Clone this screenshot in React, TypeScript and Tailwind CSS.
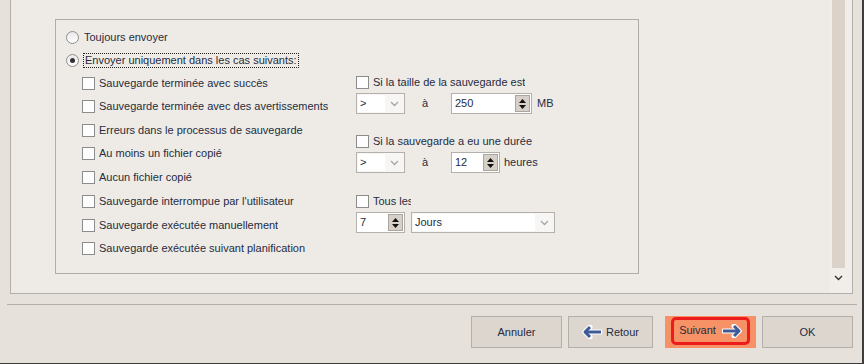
import React from 'react';

const txt = 'text-[#262c40]';

function Check({ label, clip }: { label: string; clip?: string }) {
  return (
    <div className="flex items-center">
      <span className="w-[13px] h-[13px] border border-[#8c8c8c] bg-[#fdfdfd] shrink-0" />
      <span className={`ml-[4px] whitespace-nowrap overflow-hidden ${clip ?? ''}`}>{label}</span>
    </div>
  );
}

function Radio({ checked }: { checked?: boolean }) {
  return (
    <span className="w-[13px] h-[13px] rounded-full border border-[#8f8f8f] bg-gradient-to-b from-[#e8e8e8] to-[#ffffff] flex items-center justify-center shrink-0">
      {checked && <span className="w-[5px] h-[5px] rounded-full bg-[#333]" />}
    </span>
  );
}

function Chevron({ color = '#a8a8a8' }: { color?: string }) {
  return (
    <svg width="9" height="6" viewBox="0 0 9 6">
      <path d="M1 1 L4.5 4.5 L8 1" fill="none" stroke={color} strokeWidth="1.4" />
    </svg>
  );
}

function Combo({ value, width }: { value: string; width: string }) {
  return (
    <div className={`${width} h-[21px] border border-[#b4b0ab] bg-[#f7f6f4] flex p-[1px]`}>
      <div className="flex-1 bg-white pl-[2px] flex items-center leading-none">{value}</div>
      <div className="w-[18px] flex items-center justify-center">
        <Chevron />
      </div>
    </div>
  );
}

function Spin({ value, width }: { value: string; width: string }) {
  return (
    <div className={`${width} h-[21px] border border-[#b4b0ab] bg-white flex p-[1px]`}>
      <div className="flex-1 pl-[2px] flex items-center leading-none">{value}</div>
      <div className="w-[15px] bg-[#d6d0c8] border border-[#aaa59e] flex flex-col items-center justify-center gap-[2px]">
        <svg width="7" height="4" viewBox="0 0 7 4">
          <path d="M0 4 L3.5 0 L7 4 Z" fill="#111" />
        </svg>
        <svg width="7" height="4" viewBox="0 0 7 4">
          <path d="M0 0 L3.5 4 L7 0 Z" fill="#111" />
        </svg>
      </div>
    </div>
  );
}

function Arrow({ dir }: { dir: 'left' | 'right' }) {
  const shaft = dir === 'left' ? 'M3 7 H19' : 'M1 7 H17';
  const head = dir === 'left' ? 'M8 2 L3 7 L8 12' : 'M12 2 L17 7 L12 12';
  return (
    <svg width="20" height="14" viewBox="0 0 20 14">
      <path d={shaft} stroke="#ffffff" strokeWidth="5" fill="none" strokeLinecap="round" />
      <path d={head} stroke="#ffffff" strokeWidth="5" fill="none" strokeLinecap="round" strokeLinejoin="round" />
      <path d={shaft} stroke="#3f5b97" strokeWidth="3" fill="none" />
      <path d={head} stroke="#3f5b97" strokeWidth="3" fill="none" strokeLinejoin="round" />
    </svg>
  );
}

const leftRows: [string, string][] = [
  ['Sauvegarde terminée avec succès', 'h-[22px]'],
  ['Sauvegarde terminée avec des avertissements', 'h-[24px]'],
  ['Erreurs dans le processus de sauvegarde', 'h-[24px]'],
  ['Au moins un fichier copié', 'h-[23px]'],
  ['Aucun fichier copié', 'h-[24px]'],
  ['Sauvegarde interrompue par l\'utilisateur', 'h-[24px]'],
  ['Sauvegarde exécutée manuellement', 'h-[24px]'],
  ['Sauvegarde exécutée suivant planification', 'h-[23px]'],
];

export default function App() {
  return (
    <div
      className={`w-[864px] h-[364px] bg-[#e6e1db] border-r-2 border-b border-[#3c3c3c] overflow-hidden font-['Liberation_Sans',Arial,sans-serif] text-[11px] ${txt}`}
    >
      {/* scrolling page */}
      <div className="ml-[10px] w-[843px] h-[294px] border-x border-b border-[#b3b0ab] bg-[#eeebe6] flex">
        <div className="flex-1 pl-[44px] pt-[19px]">
          <div className="w-[584px] h-[255px] border border-[#b0ada8] pt-[6px]">
            <div className="pl-[10px] h-[23px] flex items-center">
              <Radio />
              <span className="ml-[5px]">Toujours envoyer</span>
            </div>
            <div className="pl-[10px] h-[23px] flex items-center">
              <Radio checked />
              <span className="ml-[4px] px-[1px] border border-dotted border-[#222] leading-[13px]">
                Envoyer uniquement dans les cas suivants:
              </span>
            </div>
            <div className="flex">
              <div className="ml-[26px] w-[274px]">
                {leftRows.map(([label, h]) => (
                  <div key={label} className={`${h} flex items-center`}>
                    <Check label={label} />
                  </div>
                ))}
              </div>
              <div className="flex flex-col">
                <div className="h-[21px] flex items-center">
                  <Check label="Si la taille de la sauvegarde est" />
                </div>
                <div className="flex items-center">
                  <Combo value=">" width="w-[49px]" />
                  <span className="w-[46px] pl-[17px]">à</span>
                  <Spin value="250" width="w-[81px]" />
                  <span className="ml-[5px]">MB</span>
                </div>
                <div className="mt-[16px] h-[22px] flex items-center">
                  <Check label="Si la sauvegarde a eu une durée" />
                </div>
                <div className="flex items-center">
                  <Combo value=">" width="w-[49px]" />
                  <span className="w-[46px] pl-[17px]">à</span>
                  <Spin value="12" width="w-[49px]" />
                  <span className="ml-[4px]">heures</span>
                </div>
                <div className="mt-[17px] h-[22px] flex items-center">
                  <Check label="Tous les" clip="w-[38px]" />
                </div>
                <div className="flex items-center">
                  <Spin value="7" width="w-[49px]" />
                  <div className="ml-[6px]">
                    <Combo value="Jours" width="w-[144px]" />
                  </div>
                </div>
              </div>
            </div>
          </div>
        </div>
        {/* scrollbar */}
        <div className="w-[22px] bg-[#f1eeea] flex flex-col">
          <div className="ml-[2px] w-[13px] h-[268px] bg-[#dbd3ca]" />
          <div className="w-[17px] h-[20px] flex items-center justify-center">
            <Chevron color="#333" />
          </div>
        </div>
      </div>

      <div className="mt-[10px] ml-[7px] w-[850px] h-px bg-[#b3b0ab]" />

      <div className="mt-[11px] flex items-center pl-[471px] h-[32px]">
        <button className="w-[91px] h-[32px] bg-[#ddd6cf] border border-[#b3afa9]">Annuler</button>
        <button className="ml-[6px] w-[85px] h-[32px] bg-[#ddd6cf] border border-[#b3afa9] flex items-center justify-center gap-[4px]">
          <Arrow dir="left" />
          <span>Retour</span>
        </button>
        <div className="ml-[12px] w-[91px] h-[32px] bg-[#f79166] flex items-center justify-center">
          <div className="w-[79px] h-[28px] -mt-[3px] border-[3px] border-[#ec1c1c] rounded-[5px] flex items-center justify-center gap-[6px]">
            <span>Suivant</span>
            <Arrow dir="right" />
          </div>
        </div>
        <button className="ml-[6px] w-[91px] h-[32px] bg-[#ddd6cf] border border-[#b3afa9]">OK</button>
      </div>
    </div>
  );
}
